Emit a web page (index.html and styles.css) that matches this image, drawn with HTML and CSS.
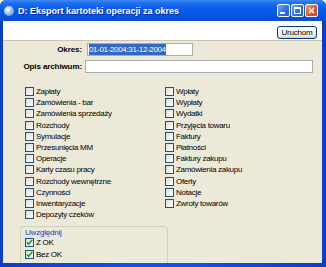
FILE: index.html
```html
<!DOCTYPE html>
<html lang="pl">
<head>
<meta charset="UTF-8">
<title>D: Eksport kartoteki operacji za okres</title>
<link rel="stylesheet" href="styles.css">
</head>
<body>
<div class="window">
  <div class="titlebar">
    <span class="app-icon"></span>
    <span class="title">D: Eksport kartoteki operacji za okres</span>
    <div class="controls">
      <span class="ctl"><svg width="11" height="11" viewBox="0 0 11 11"><rect x="2" y="7" width="5" height="2" fill="#fff"/></svg></span>
      <span class="ctl"><svg width="11" height="11" viewBox="0 0 11 11"><rect x="2.5" y="2.5" width="6" height="6" fill="none" stroke="#fff" stroke-width="1"/><rect x="2" y="2" width="7" height="2" fill="#fff"/></svg></span>
      <span class="ctl ctl-close"><svg width="11" height="11" viewBox="0 0 11 11"><path d="M3 3 L8 8 M8 3 L3 8" stroke="#fff" stroke-width="1.6"/></svg></span>
    </div>
  </div>
  <div class="client">
    <div class="toolbar">
      <button class="btn">Uruchom</button>
    </div>
    <div class="panel">
      <div class="fields">
        <label class="lbl">Okres:</label>
        <div class="input okres"><span class="sel">01-01-2004:31-12-2004</span></div>
        <label class="lbl">Opis archiwum:</label>
        <div class="input opis"></div>
      </div>

      <div class="checks">
        <div class="col">
          <div class="chk"><span class="box"></span>Zapłaty</div>
          <div class="chk"><span class="box"></span>Zamówienia - bar</div>
          <div class="chk"><span class="box"></span>Zamówienia sprzedaży</div>
          <div class="chk"><span class="box"></span>Rozchody</div>
          <div class="chk"><span class="box"></span>Symulacje</div>
          <div class="chk"><span class="box"></span>Przesunięcia MM</div>
          <div class="chk"><span class="box"></span>Operacje</div>
          <div class="chk"><span class="box"></span>Karty czasu pracy</div>
          <div class="chk"><span class="box"></span>Rozchody wewnętrzne</div>
          <div class="chk"><span class="box"></span>Czynności</div>
          <div class="chk"><span class="box"></span>Inwentaryzacje</div>
          <div class="chk"><span class="box"></span>Depozyty czeków</div>
        </div>
        <div class="col">
          <div class="chk"><span class="box"></span>Wpłaty</div>
          <div class="chk"><span class="box"></span>Wypłaty</div>
          <div class="chk"><span class="box"></span>Wydatki</div>
          <div class="chk"><span class="box"></span>Przyjęcia towaru</div>
          <div class="chk"><span class="box"></span>Faktury</div>
          <div class="chk"><span class="box"></span>Płatności</div>
          <div class="chk"><span class="box"></span>Faktury zakupu</div>
          <div class="chk"><span class="box"></span>Zamówienia zakupu</div>
          <div class="chk"><span class="box"></span>Oferty</div>
          <div class="chk"><span class="box"></span>Notacje</div>
          <div class="chk"><span class="box"></span>Zwroty towarów</div>
        </div>
      </div>

      <div class="group">
        <div class="group-title">Uwzględnij</div>
        <div class="chk"><span class="box checked"><svg width="7" height="7" viewBox="0 0 7 7"><path d="M0.8 3.2 L2.6 5.2 L6.2 1" fill="none" stroke="#21a121" stroke-width="1.6"/></svg></span>Z OK</div>
        <div class="chk"><span class="box checked"><svg width="7" height="7" viewBox="0 0 7 7"><path d="M0.8 3.2 L2.6 5.2 L6.2 1" fill="none" stroke="#21a121" stroke-width="1.6"/></svg></span>Bez OK</div>
      </div>
    </div>
  </div>
</div>
</body>
</html>
```

FILE: styles.css
```css
/* okno w stylu XP */
body {
    margin: 0;
    font-family: "Liberation Sans", Arial, sans-serif;
    background: #fff;
}

.window {
    width: 326px;
    height: 267px;
    box-sizing: border-box;
    padding: 0 4px 4px 3px;
    display: flex;
    flex-direction: column;
    background: linear-gradient(90deg, #0a3fc4, #0a55e6 40%, #0a55e6 60%, #0a3fc4);
    border-radius: 6px 6px 0 0;
}

.titlebar {
    height: 21px;
    margin: 0 -4px 0 -3px;
    padding: 0 8px 0 4px;
    display: flex;
    align-items: center;
    color: #fff;
    border-radius: 6px 6px 0 0;
    background: linear-gradient(#3c8af5 0%, #1d6ff0 15%, #0a5ae6 45%, #0456e4 70%, #0b4dd4 100%);
}

.app-icon {
    width: 10px;
    height: 10px;
    margin-right: 4px;
    border-radius: 50%;
    background: radial-gradient(circle at 35% 35%, #ffffff, #9fc4e8 45%, #4d7fb8 100%);
}

.title {
    flex: 1;
    font-size: 9px;
    font-weight: bold;
    text-shadow: 1px 1px #0a2a98;
}

.controls {
    display: flex;
    gap: 1px;
}

.ctl {
    width: 13px;
    height: 13px;
    box-sizing: border-box;
    border: 1px solid #fff;
    border-radius: 2px;
    display: flex;
    align-items: center;
    justify-content: center;
    background: linear-gradient(135deg, #7aa8fa, #3473ec 50%, #1c56d8);
}

.ctl-close {
    background: linear-gradient(135deg, #f29a7a, #e25a2c 50%, #c8401c);
}

.client {
    flex: 1;
    display: flex;
    flex-direction: column;
    background: #ece9d8;
    overflow: hidden;
}

.toolbar {
    height: 20px;
    box-sizing: border-box;
    padding: 5px 5px 0 0;
    display: flex;
    justify-content: flex-end;
    align-items: flex-start;
    background: #fff;
    border-bottom: 1px solid #c9c6b6;
}

.btn {
    width: 40px;
    height: 13px;
    padding: 0;
    font-family: inherit;
    font-size: 8px;
    line-height: 11px;
    letter-spacing: -0.2px;
    color: #000;
    border: 1px solid #003c74;
    border-radius: 3px;
    background: linear-gradient(#ffffff, #f2f1ea 70%, #d8d3c6);
}

.panel {
    flex: 1;
    display: flex;
    flex-direction: column;
    padding: 2px 9px 0 0;
}

.fields {
    display: grid;
    grid-template-columns: 79px 1fr;
    column-gap: 3px;
    row-gap: 4px;
}

.lbl {
    font-size: 8px;
    font-weight: bold;
    line-height: 13px;
    text-align: right;
    letter-spacing: -0.1px;
}

.input {
    height: 13px;
    box-sizing: border-box;
    border: 1px solid #a5acb2;
    background: #fff;
    display: flex;
    align-items: center;
}

.okres {
    width: 106px;
    margin-left: 2px;
}

.sel {
    margin-left: 1px;
    font-size: 8px;
    line-height: 11px;
    letter-spacing: -0.35px;
    color: #fff;
    background: #316ac5;
}

.checks {
    display: grid;
    grid-template-columns: 140px 140px;
    margin: 13px 0 0 22px;
}

.chk {
    height: 11.2px;
    display: flex;
    align-items: center;
    gap: 2px;
    font-size: 8px;
    letter-spacing: -0.3px;
    color: #000;
    white-space: nowrap;
}

.box {
    width: 9px;
    height: 9px;
    box-sizing: border-box;
    flex: none;
    border: 1px solid #1c5180;
    background: linear-gradient(135deg, #dcdcd7, #ffffff);
    display: flex;
    align-items: center;
    justify-content: center;
}

.group {
    flex: 1;
    width: 148px;
    box-sizing: border-box;
    margin: 6px 0 -6px 17px;
    padding: 1px 0 0 4px;
    border: 1px solid #d0d0bf;
    border-radius: 3px;
}

.group-title {
    height: 9px;
    font-size: 8px;
    line-height: 9px;
    letter-spacing: -0.2px;
    color: #0046d5;
}
```
